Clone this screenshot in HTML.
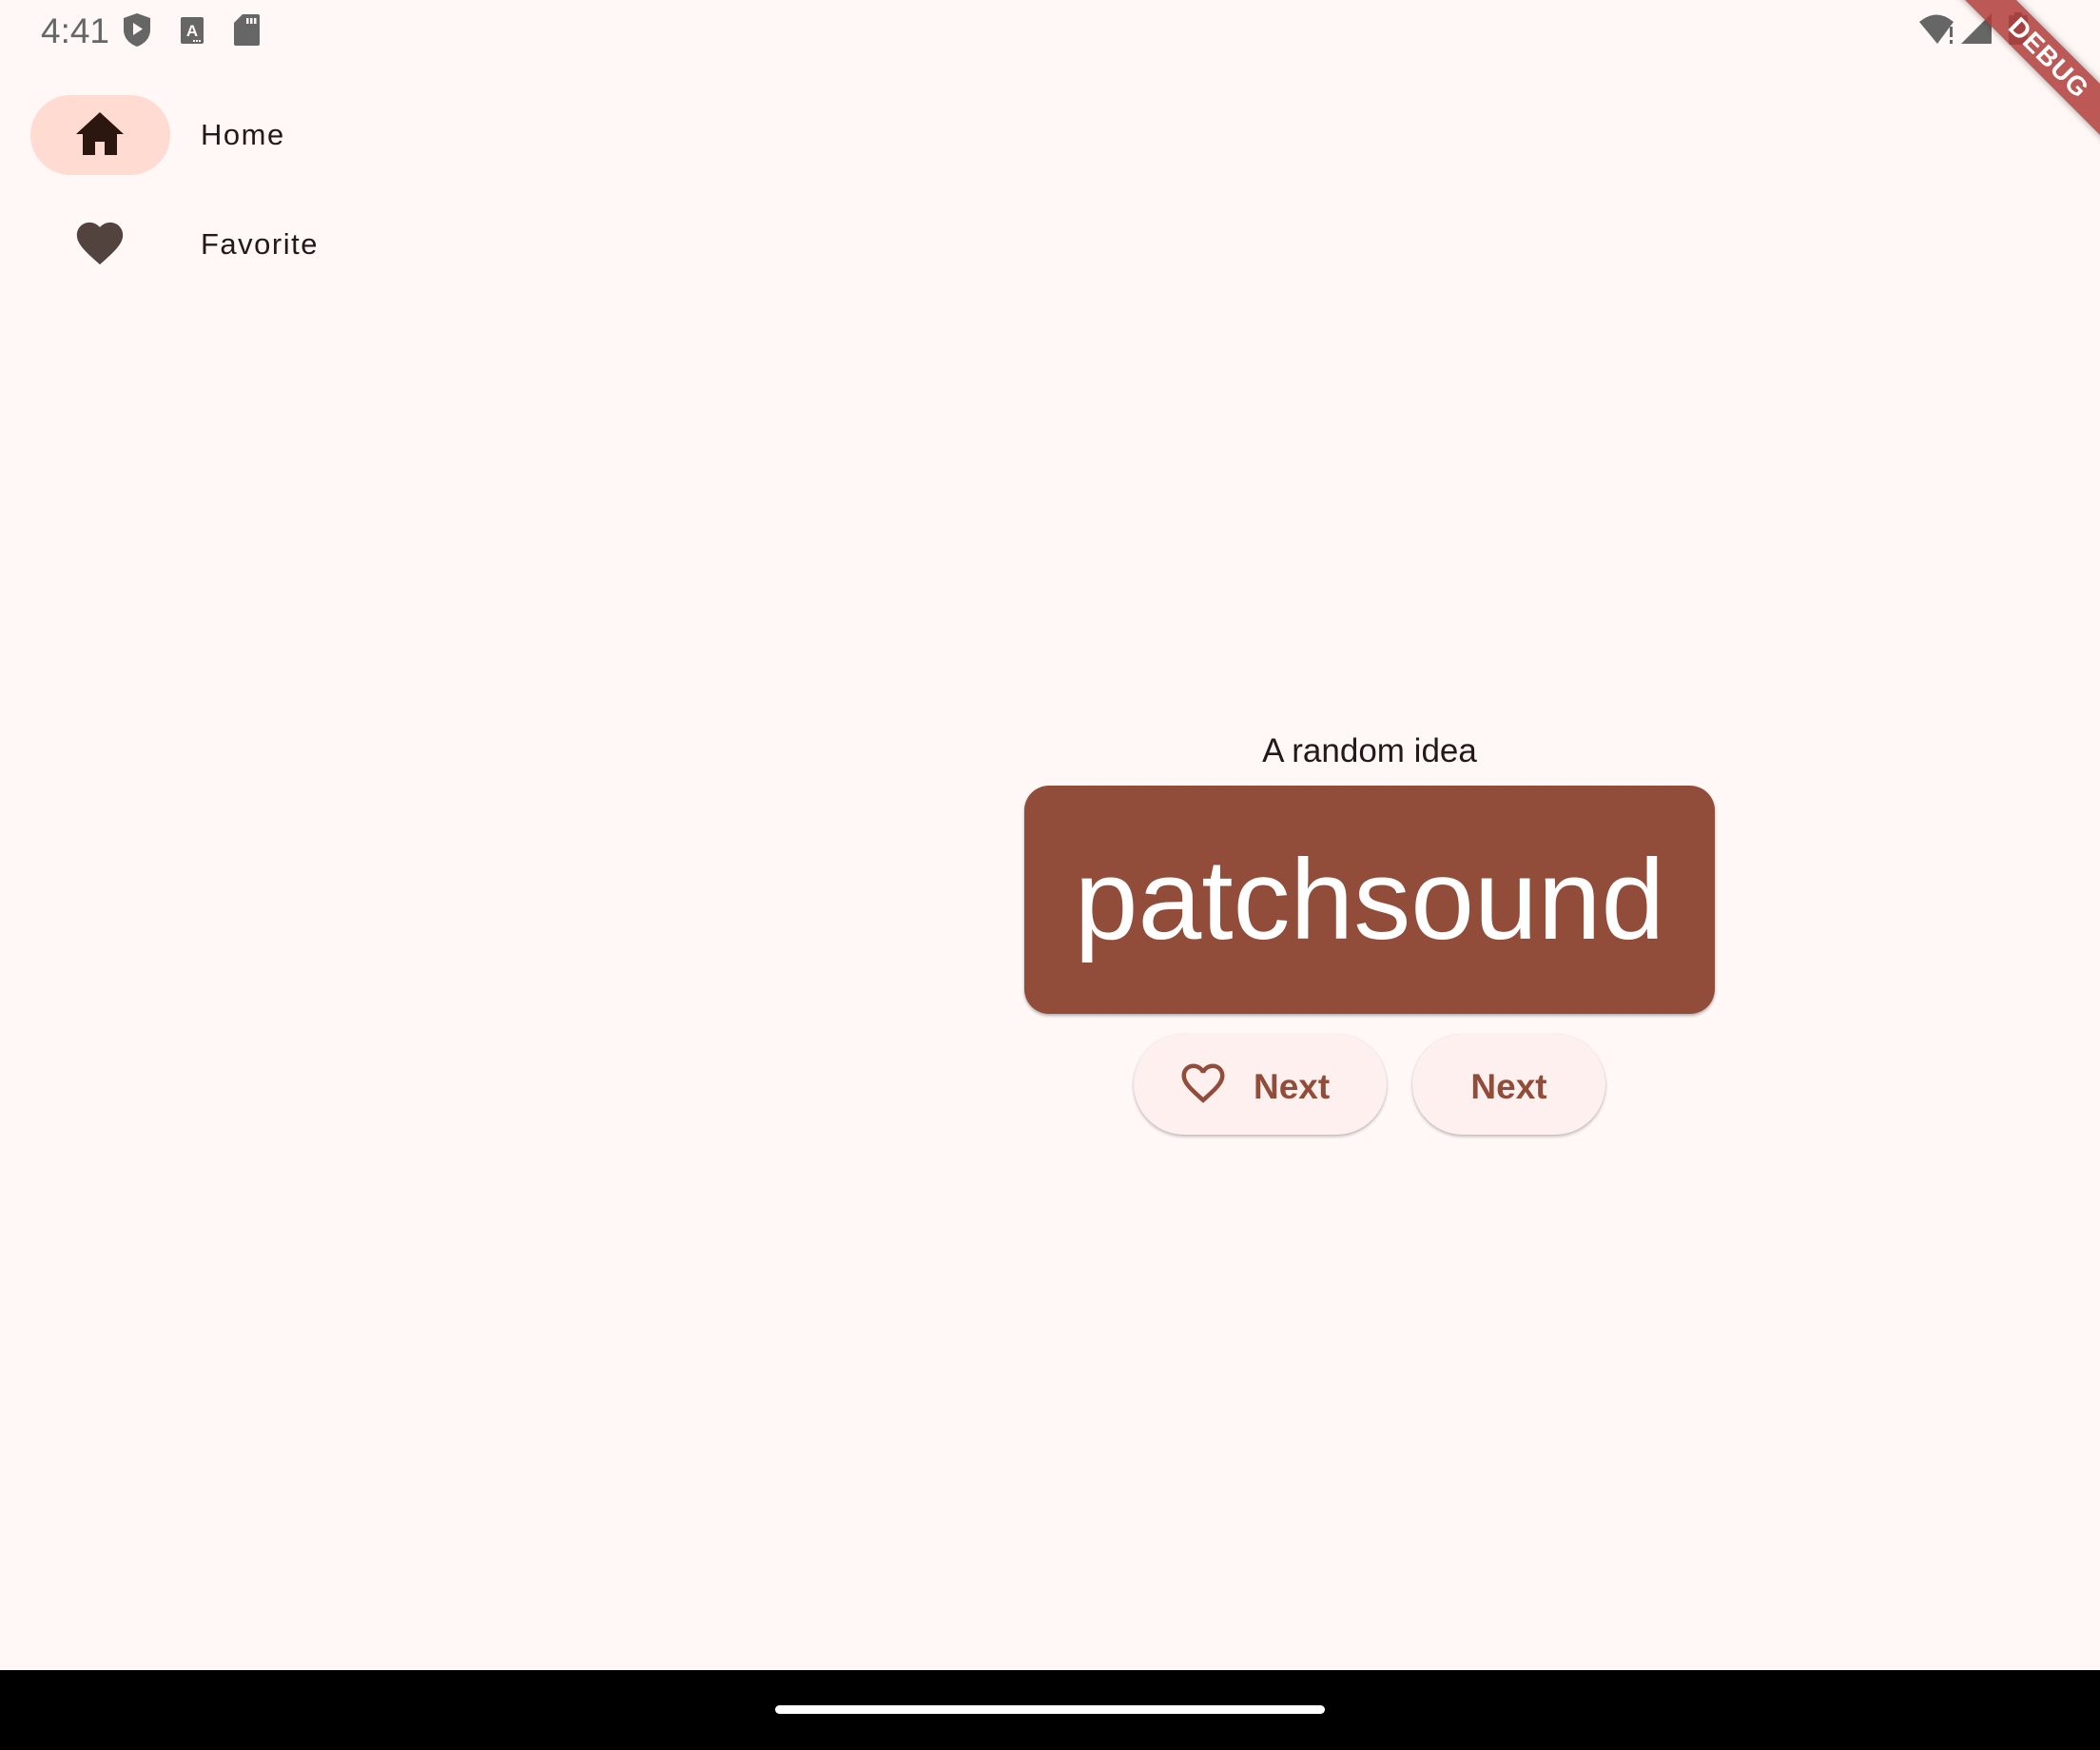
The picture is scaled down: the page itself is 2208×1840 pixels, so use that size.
<!DOCTYPE html>
<html><head><meta charset="utf-8"><style>
html,body{margin:0;padding:0;}
body{width:2208px;height:1840px;background:#fff8f6;position:relative;overflow:hidden;font-family:"Liberation Sans",sans-serif;}
.abs{position:absolute;}
.btn{position:absolute;top:1087px;height:106px;border-radius:53px;background:#fdf0ee;box-shadow:0 2px 3px rgba(0,0,0,0.25),0 0 1px rgba(0,0,0,0.1);}
.bt{position:absolute;font-size:37px;font-weight:bold;color:#914d3a;line-height:1;top:37px;}
</style></head><body>
<!-- status bar -->
<div class="abs" style="left:43px;top:11px;font-size:37px;color:#666;line-height:44px;">4:41</div>
<svg class="abs" style="left:128px;top:13px" width="32" height="38" viewBox="0 0 32 38"><path d="M16 1 L30 6 V18 C30 27 24 33 16 36 C8 33 2 27 2 18 V6 Z" fill="#666"/><path d="M12 11 L22 17.5 L12 24 Z" fill="#fff8f6"/></svg>
<svg class="abs" style="left:190px;top:18px" width="24" height="28" viewBox="0 0 24 28"><rect x="0" y="0" width="24" height="28" rx="2" fill="#666"/><text x="12" y="20" font-size="17" font-weight="bold" fill="#fff8f6" text-anchor="middle" font-family="Liberation Sans">A</text><rect x="13" y="24" width="2" height="2" fill="#fff8f6"/><rect x="16" y="24" width="2" height="2" fill="#fff8f6"/><rect x="19" y="24" width="2" height="2" fill="#fff8f6"/></svg>
<svg class="abs" style="left:246px;top:15px" width="27" height="33" viewBox="0 0 27 33"><path d="M9 0 H25 Q27 0 27 2 V31 Q27 33 25 33 H2 Q0 33 0 31 V9 Z" fill="#666"/><rect x="13" y="4" width="2.5" height="6" fill="#fff8f6"/><rect x="17" y="4" width="2.5" height="6" fill="#fff8f6"/><rect x="21" y="4" width="2.5" height="6" fill="#fff8f6"/></svg>
<svg class="abs" style="left:2018px;top:14px" width="40" height="34" viewBox="0 0 40 34"><path d="M0 9 Q18 -6 36 9 L19 32 Z" fill="#666"/><rect x="32" y="14" width="3" height="11" fill="#666"/><rect x="32" y="28" width="3" height="4" fill="#666"/></svg>
<svg class="abs" style="left:2062px;top:14px" width="32" height="32" viewBox="0 0 32 32"><path d="M32 0 V32 H0 Z" fill="#666"/></svg>
<svg class="abs" style="left:2112px;top:13px" width="20" height="34" viewBox="0 0 20 34"><rect x="6" y="0" width="8" height="3" fill="#666"/><rect x="0" y="3" width="20" height="31" rx="2" fill="#666"/></svg>
<!-- nav rail -->
<div class="abs" style="left:32px;top:100px;width:147px;height:84px;border-radius:42px;background:#ffdbd1;"></div>
<svg class="abs" style="left:79px;top:117px" width="52" height="46" viewBox="0 0 52 46"><path d="M26 1 L51 24 H44 V46 H31 V32 H21 V46 H8 V24 H1 Z" fill="#2c1610"/></svg>
<div class="abs" style="left:211px;top:125px;font-size:31px;letter-spacing:1.5px;color:#231918;line-height:34px;">Home</div>
<svg class="abs" style="left:76px;top:231px" width="58" height="54" viewBox="0 0 24 22"><path d="M12 21.35l-1.45-1.32C5.4 15.36 2 12.28 2 8.5 2 5.42 4.42 3 7.5 3c1.74 0 3.41.81 4.5 2.09C13.09 3.81 14.76 3 16.5 3 19.58 3 22 5.42 22 8.5c0 3.78-3.4 6.86-8.55 11.54L12 21.35z" fill="#53433f" transform="translate(0,-2)"/></svg>
<div class="abs" style="left:211px;top:240px;font-size:31px;letter-spacing:1.5px;color:#231918;line-height:34px;">Favorite</div>
<!-- main -->
<div class="abs" style="left:1240px;width:400px;top:770px;text-align:center;font-size:35px;color:#231918;line-height:40px;">A random idea</div>
<div class="abs" style="left:1077px;top:826px;width:726px;height:240px;border-radius:26px;background:#914d3a;box-shadow:0 2px 3px rgba(0,0,0,0.3);"></div>
<div class="abs" style="left:1077px;top:866px;width:726px;text-align:center;font-size:120px;color:#fff;line-height:160px;">patchsound</div>
<div class="btn" style="left:1192px;width:266px;">
<svg class="abs" style="left:46px;top:29px" width="54" height="50" viewBox="0 0 24 22"><path d="M16.5 3c-1.74 0-3.41.81-4.5 2.09C10.91 3.81 9.24 3 7.5 3 4.42 3 2 5.42 2 8.5c0 3.78 3.4 6.86 8.55 11.540L12 21.35l1.45-1.32C18.6 15.36 22 12.28 22 8.5 22 5.42 19.58 3 16.5 3zm-4.4 15.55l-.1.1-.1-.1C7.14 14.24 4 11.39 4 8.5 4 6.5 5.5 5 7.5 5c1.54 0 3.04.99 3.57 2.36h1.87C13.46 5.99 14.96 5 16.5 5c2 0 3.5 1.5 3.5 3.5 0 2.89-3.14 5.74-7.9 10.05z" fill="#914d3a" transform="translate(0,-2)"/></svg>
<div class="bt" style="left:126px;">Next</div></div>
<div class="btn" style="left:1485px;width:203px;"><div class="bt" style="left:0;width:203px;text-align:center;">Next</div></div>
<!-- debug banner -->
<div class="abs" style="left:2024px;top:42px;width:260px;height:38px;background:rgba(176,60,58,0.85);transform:rotate(45deg);transform-origin:center;box-shadow:0 0 8px rgba(0,0,0,0.4);color:#fff;font-weight:bold;font-size:28px;line-height:38px;text-align:center;letter-spacing:1px;">DEBUG</div>
<!-- nav bar -->
<div class="abs" style="left:0;top:1756px;width:2208px;height:84px;background:#000;"></div>
<div class="abs" style="left:815px;top:1793px;width:578px;height:9px;border-radius:5px;background:#fff;"></div>
</body></html>
